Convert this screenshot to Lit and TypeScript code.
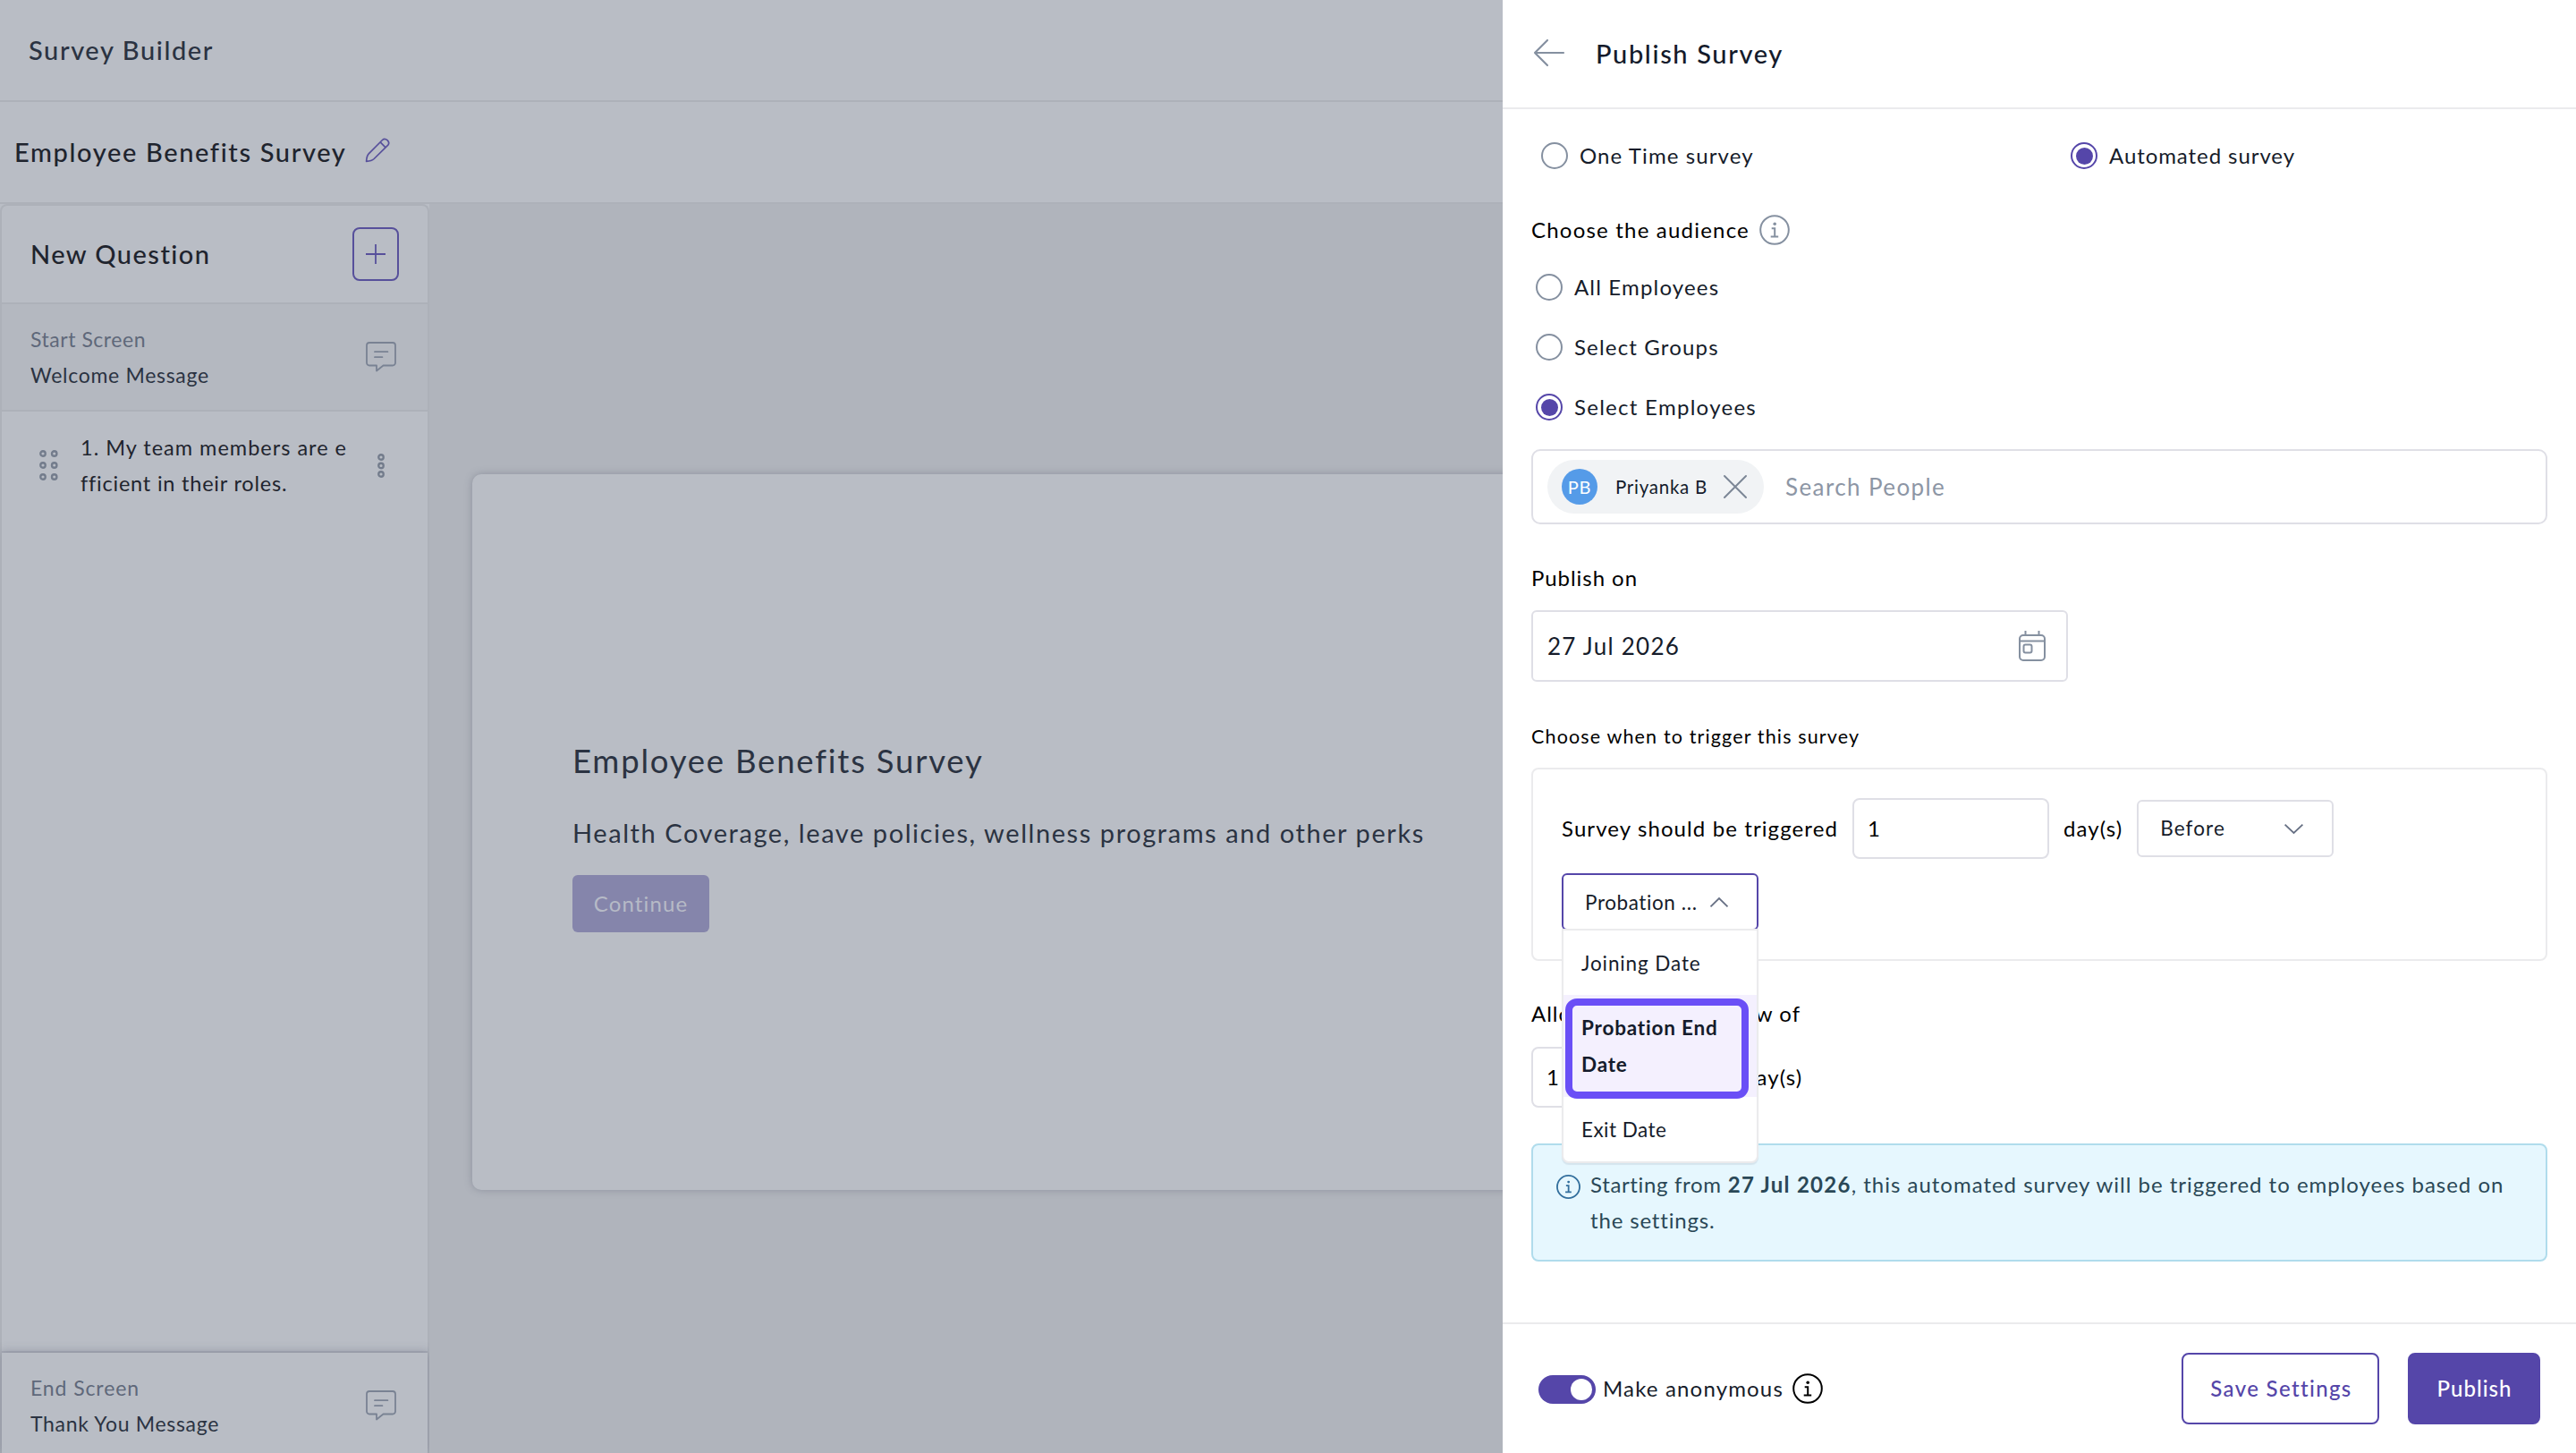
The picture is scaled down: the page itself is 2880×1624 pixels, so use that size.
import { LitElement, html, css, svg } from "lit";
import { customElement } from "lit/decorators.js";

const infoIcon = (cls: string) => html`<svg class="info ${cls}" viewBox="0 0 34 34" fill="none" stroke="currentColor" stroke-width="2">
  <circle cx="17" cy="17" r="15.8"></circle>
  <circle cx="17.2" cy="10.2" r="1.8" fill="currentColor" stroke="none"></circle>
  <path d="M13.700 15.200h3.500v9.200M12.700 24.500h8.500"></path>
</svg>`;

const messageIcon = () => html`<svg class="msg" viewBox="0 0 34 34" fill="none" stroke="currentColor" stroke-width="1.8" stroke-linejoin="round" stroke-linecap="round">
  <path d="M4 1h26a3 3 0 0 1 3 3v19.5a3 3 0 0 1-3 3H19.5L12 32.5v-6H4a3 3 0 0 1-3-3V4a3 3 0 0 1 3-3z"></path>
  <path d="M10 11.2h14.4M10 17.2h8.4"></path>
</svg>`;

const dots = (xs: number[], ys: number[], w: number, h: number, cls: string) => html`<svg class=${cls} viewBox="0 0 ${w} ${h}" fill="none" stroke="currentColor" stroke-width="2.3">
  ${xs.map((x) => ys.map((y) => svg`<circle cx=${x} cy=${y} r="2.75"></circle>`))}
</svg>`;

@customElement("app-root")
export class AppRoot extends LitElement {
  static styles = css`
    :host { display: block; width: 2880px; height: 1624px; overflow: hidden; font-family: Lato, "Liberation Sans", sans-serif; font-size: 24px; line-height: 40px; color: #161c2a; }
    * { box-sizing: border-box; }
    span, b { white-space: nowrap; }
    svg { display: block; flex: none; overflow: visible; }
    .page { display: flex; width: 2880px; height: 1624px; }
    .builder { width: 1680px; display: flex; flex-direction: column; background: #b9bdc5; overflow: hidden; color: #2b3342; }
    .bar { flex: none; height: 114px; border-bottom: 2px solid #adb1b9; display: flex; align-items: center; }
    .bar.top { padding-left: 32px; font-size: 29px; font-weight: 500; letter-spacing: 1.6px; }
    .bar.name { padding-left: 16px; gap: 22px; font-size: 29px; font-weight: 500; color: #1f242e; letter-spacing: 1.63px; }
    .pencil { color: #57509b; margin-top: -6px; }
    .work { flex: 1; min-height: 0; display: flex; }
    .side { width: 480px; display: flex; flex-direction: column; border: 2px solid #adb1b9; border-bottom: 0; border-radius: 8px 8px 0 0; }
    .newq { height: 110px; border-bottom: 2px solid #adb1b9; display: flex; align-items: center; justify-content: space-between; padding: 0 32px; font-size: 29px; font-weight: 500; color: #1f242e; letter-spacing: 1.45px; }
    .plus { width: 52px; height: 60px; border: 2px solid #57509b; border-radius: 8px; display: flex; align-items: center; justify-content: center; color: #57509b; }
    .screen { height: 120px; display: flex; align-items: center; justify-content: space-between; padding: 0 35px 0 32px; font-size: 23px; letter-spacing: .7px; }
    .screen.start { background: #b4b8c0; border-bottom: 2px solid #adb1b9; }
    .screen.end { height: 112px; padding-top: 6px; margin-top: auto; background: #b9bdc5; box-shadow: 0 0 10px 1px rgba(100, 105, 125, .45), 0 -2px 0 #a9adb7; }
    .lines { display: flex; flex-direction: column; align-items: flex-start; }
    .muted { color: #5f687a; }
    .start .muted { letter-spacing: .54px; }
    .end .muted { letter-spacing: .9px; }
    .msg { width: 34px; height: 34px; color: #798293; }
    .question { display: flex; align-items: center; height: 120px; padding-left: 41px; color: #1f242e; font-size: 23.5px; letter-spacing: 1px; }
    .question span + span { letter-spacing: .79px; }
    .grip { width: 21px; height: 34px; color: #737c8c; margin-left: 1px; }
    .question .lines { margin-left: 25px; width: 300px; }
    .kebab { width: 8px; height: 27px; margin-left: 32px; color: #737c8c; }
    .canvas { flex: 1; background: #b0b4bc; padding: 302px 0 294px 48px; display: flex; }
    .preview { flex: 1; margin-right: -20px; border-radius: 10px 0 0 10px; background: #b9bdc5; box-shadow: 0 0 8px rgba(90, 95, 115, .4); padding: 292px 0 0 112px; display: flex; flex-direction: column; align-items: flex-start; }
    .ptitle { font-size: 36.5px; line-height: 56px; letter-spacing: 1.78px; }
    .psub { font-size: 29px; margin-top: 33px; letter-spacing: 1.57px; }
    .cont { margin-top: 27px; width: 153px; height: 64px; border-radius: 6px; background: #8585ab; color: #b6bac6; display: flex; align-items: center; justify-content: center; letter-spacing: 1.14px; }
    .panel { width: 1200px; background: #fff; display: flex; flex-direction: column; }
    .phead { flex: none; height: 122px; border-bottom: 2px solid #ebebed; display: flex; align-items: center; padding-left: 35px; font-size: 29px; font-weight: 500; color: #141b2b; letter-spacing: 1.64px; }
    .phead span { margin-left: 35px; }
    .arrow { color: #8590a0; margin-top: -2px; }
    .body { flex: 1; padding: 32px 32px 0; display: flex; flex-direction: column; letter-spacing: 1.05px; }
    .row { display: flex; align-items: center; height: 40px; flex: none; }
    .kinds { padding-left: 11px; display: grid; grid-template-columns: 592px 1fr; }
    .radio { display: flex; align-items: center; gap: 13px; height: 40px; letter-spacing: 1.17px; }
    .kinds .radio { letter-spacing: 1.1px; }
    .kinds .on { letter-spacing: .93px; }
    .a2.on { letter-spacing: 1.28px; }
    .ring { width: 30px; height: 30px; border: 2px solid #8590a0; border-radius: 50%; display: flex; align-items: center; justify-content: center; }
    .on .ring { border-color: #5546a9; }
    .on .ring::after { content: ""; width: 19px; height: 19px; border-radius: 50%; background: #5546a9; }
    .black { color: #000; }
    .aud { margin-top: 43px; gap: 11px; letter-spacing: 1.2px; }
    .a1 { margin: 24px 0 0 5px; }
    .a2 { margin: 27px 0 0 5px; }
    .info { width: 34px; height: 34px; }
    .info.grey { color: #8590a0; }
    .info.dark { color: #000; }
    .info.blue { width: 27px; height: 27px; color: #336f9d; stroke-width: 2.3; }
    .search { margin-top: 27px; height: 84px; border: 2px solid #dfdfe6; border-radius: 10px; display: flex; align-items: center; padding-left: 16px; flex: none; font-size: 26px; color: #8d96a5; letter-spacing: 1.4px; }
    .chip { width: 242px; height: 60px; border-radius: 30px; background: #f1f3f5; display: flex; align-items: center; padding-left: 16px; margin-right: 24px; font-size: 20.5px; color: #141b2b; letter-spacing: .74px; }
    .avatar { width: 40px; height: 40px; border-radius: 50%; background: #559be8; color: #fff; display: flex; align-items: center; justify-content: center; margin-right: 20px; font-size: 20px; }
    .chip svg { margin-left: 19px; color: #7c8696; }
    .pub { margin-top: 40px; letter-spacing: .95px; }
    .date { margin-top: 16px; width: 600px; height: 80px; flex: none; border: 2px solid #dfdfe6; border-radius: 6px; display: flex; align-items: center; justify-content: space-between; padding: 0 23px 0 16px; font-size: 26px; letter-spacing: 1.25px; }
    .date svg { color: #8590a0; }
    .when { margin-top: 41px; font-size: 21.5px; letter-spacing: 1.14px; }
    .box { margin-top: 15px; height: 216px; flex: none; border: 2px solid #ebebed; border-radius: 8px; padding: 32px; }
    .line { display: flex; align-items: center; height: 68px; flex: none; letter-spacing: 1.1px; }
    .num { width: 220px; height: 68px; border: 2px solid #dfdfe6; border-radius: 8px; padding-left: 15px; display: flex; align-items: center; background: #fff; }
    .line .num { margin: 0 16px; }
    .line.second .num { margin-left: 0; margin-right: 17px; }
    .select { width: 220px; height: 64px; border: 2px solid #dfdfe6; border-radius: 6px; display: flex; align-items: center; font-size: 22.5px; padding-left: 24px; position: relative; color: #161c2a; }
    .line .select { margin-left: 16px; justify-content: space-between; padding-right: 32px; }
    .select svg { color: #677084; }
    .select.open { border-color: #5546a9; margin-top: 16px; padding-top: 1px; letter-spacing: .59px; }
    .select.open svg { margin-left: 14px; }
    .menu { position: absolute; left: -2px; top: 60px; width: 220px; background: #fff; border: 2px solid #ebebed; border-radius: 0 0 8px 8px; box-shadow: 0 2px 1px rgba(60, 70, 90, .1); z-index: 2; line-height: 41px; display: flex; flex-direction: column; }
    .opt { padding: 16px 20px 15px; display: flex; flex-direction: column; align-items: flex-start; letter-spacing: .88px; }
    .opt.last { letter-spacing: .45px; }
    .opt.sel { padding-bottom: 16px; background: #f4f0fe; font-weight: 700; color: #141b2b; letter-spacing: .8px; }
    .mark { position: absolute; left: 2px; top: 76px; width: 205px; height: 112px; border: 8px solid #6a4ff6; border-radius: 13px; }
    .allow { margin-top: 39px; letter-spacing: 1px; }
    .second { margin-top: 17px; }
    .alert { margin-top: 40px; height: 132px; flex: none; border: 2px solid #b0dcec; border-radius: 8px; background: #e6f7fe; display: flex; padding: 24px 26px 0; gap: 11px; color: #2a4857; letter-spacing: .99px; }
    .alert .from { letter-spacing: .65px; }
    .alert b { letter-spacing: 1.27px; }
    .alert .tail { letter-spacing: .84px; }
    .alert .info { margin-top: 9px; }
    .foot { flex: none; height: 146px; border-top: 2px solid #ebebed; display: flex; align-items: center; padding: 0 40px; }
    .toggle { width: 64px; height: 32px; border-radius: 16px; background: #5546a9; padding: 4px; display: flex; justify-content: flex-end; margin-top: 2px; }
    .knob { width: 24px; height: 24px; border-radius: 50%; background: #fff; }
    .anon { margin-left: 8px; margin-right: 10px; letter-spacing: 1.16px; }
    .btn { height: 80px; border: 2px solid #5546a9; border-radius: 8px; display: flex; align-items: center; justify-content: center; color: #5546a9; font-weight: 500; }
    .save { width: 221px; margin-left: auto; margin-right: 32px; padding-left: 2px; letter-spacing: 1.35px; }
    .publish { width: 148px; background: #5546a9; color: #fff; padding-left: 1px; letter-spacing: 1.03px; }
  `;

  render() {
    return html`<div class="page">
      <div class="builder">
        <div class="bar top"><span>Survey Builder</span></div>
        <div class="bar name">
          <span>Employee Benefits Survey</span>
          <svg class="pencil" width="27" height="27" viewBox="0 0 27 27" fill="none" stroke="currentColor" stroke-width="1.7" stroke-linejoin="round"><path d="M.6 26.400Q1 20 3.200 17.800L18.500 2.500Q21 0 24 2.700Q27 5.600 24.800 8.100L9.200 23.500Q6.500 26 .6 26.400zM16.200 4.900l5.600 5.800"></path></svg>
        </div>
        <div class="work">
          <div class="side">
            <div class="newq"><span>New Question</span>
              <div class="plus"><svg width="22" height="22" viewBox="0 0 22 22" fill="none" stroke="currentColor" stroke-width="1.8"><path d="M11 0v22M0 11h22"></path></svg></div>
            </div>
            <div class="screen start">
              <div class="lines"><span class="muted">Start Screen</span><span>Welcome Message</span></div>${messageIcon()}
            </div>
            <div class="question">
              ${dots([4, 16.7], [4, 17, 30], 21, 34, "grip")}
              <div class="lines"><span>1. My team members are e</span><span>fficient in their roles.</span></div>
              ${dots([4], [4, 13.5, 23], 8, 27, "kebab")}
            </div>
            <div class="screen end">
              <div class="lines"><span class="muted">End Screen</span><span>Thank You Message</span></div>${messageIcon()}
            </div>
          </div>
          <div class="canvas"><div class="preview">
            <span class="ptitle">Employee Benefits Survey</span>
            <span class="psub">Health Coverage, leave policies, wellness programs and other perks</span>
            <div class="cont"><span>Continue</span></div>
          </div></div>
        </div>
      </div>
      <div class="panel">
        <div class="phead">
          <svg class="arrow" width="34" height="30" viewBox="0 0 34 30" fill="none" stroke="currentColor" stroke-width="2.2" stroke-linecap="round" stroke-linejoin="round"><path d="M15 1L1 15l14 14M1 15h32"></path></svg>
          <span>Publish Survey</span>
        </div>
        <div class="body">
          <div class="row kinds">
            <div class="radio"><div class="ring"></div><span>One Time survey</span></div>
            <div class="radio on"><div class="ring"></div><span>Automated survey</span></div>
          </div>
          <div class="row aud black"><span>Choose the audience</span>${infoIcon("grey")}</div>
          <div class="radio a1"><div class="ring"></div><span>All Employees</span></div>
          <div class="radio a2"><div class="ring"></div><span>Select Groups</span></div>
          <div class="radio a2 on"><div class="ring"></div><span>Select Employees</span></div>
          <div class="search">
            <div class="chip"><div class="avatar"><span>PB</span></div><span>Priyanka B</span>
              <svg width="24" height="24" viewBox="0 0 24 24" stroke="currentColor" stroke-width="2" stroke-linecap="round"><path d="M0 0l24 24M24 0L0 24"></path></svg></div>
            <span>Search People</span>
          </div>
          <div class="row pub black"><span>Publish on</span></div>
          <div class="date"><span>27 Jul 2026</span>
            <svg width="30" height="34" viewBox="0 0 30 34" fill="none" stroke="currentColor" stroke-width="2"><rect x="1" y="5" width="28" height="28" rx="4"></rect><path d="M1 11.5h28M7.5 0v5M22.5 0v5"></path><rect x="5.5" y="15.5" width="9" height="9" rx="2"></rect></svg>
          </div>
          <div class="row when black"><span>Choose when to trigger this survey</span></div>
          <div class="box">
            <div class="line black"><span>Survey should be triggered</span><div class="num">1</div><span>day(s)</span>
              <div class="select"><span>Before</span><svg width="21" height="11" viewBox="0 0 21 11" fill="none" stroke="currentColor" stroke-width="1.8"><path d="M.6.6L10.500 10L20.400.6"></path></svg></div>
            </div>
            <div class="select open"><span>Probation ...</span><svg width="20" height="11" viewBox="0 0 20 11" fill="none" stroke="currentColor" stroke-width="1.8"><path d="M.5 10.400L10 1l9.500 9.400"></path></svg>
              <div class="menu">
                <div class="opt"><span>Joining Date</span></div>
                <div class="opt sel"><span>Probation End</span><span>Date</span></div>
                <div class="opt last"><span>Exit Date</span></div>
                <div class="mark"></div>
              </div>
            </div>
          </div>
          <div class="row allow black"><span>Allow response window of</span></div>
          <div class="line second black"><div class="num">1</div><span>day(s)</span></div>
          <div class="alert">${infoIcon("blue")}
            <div class="lines"><div><span class="from">Starting from</span> <b>27 Jul 2026</b><span>, this automated survey will be triggered to employees based on</span></div><span class="tail">the settings.</span></div>
          </div>
        </div>
        <div class="foot">
          <div class="toggle"><div class="knob"></div></div>
          <span class="anon">Make anonymous</span>${infoIcon("dark")}
          <div class="btn save"><span>Save Settings</span></div>
          <div class="btn publish"><span>Publish</span></div>
        </div>
      </div>
    </div>`;
  }
}
